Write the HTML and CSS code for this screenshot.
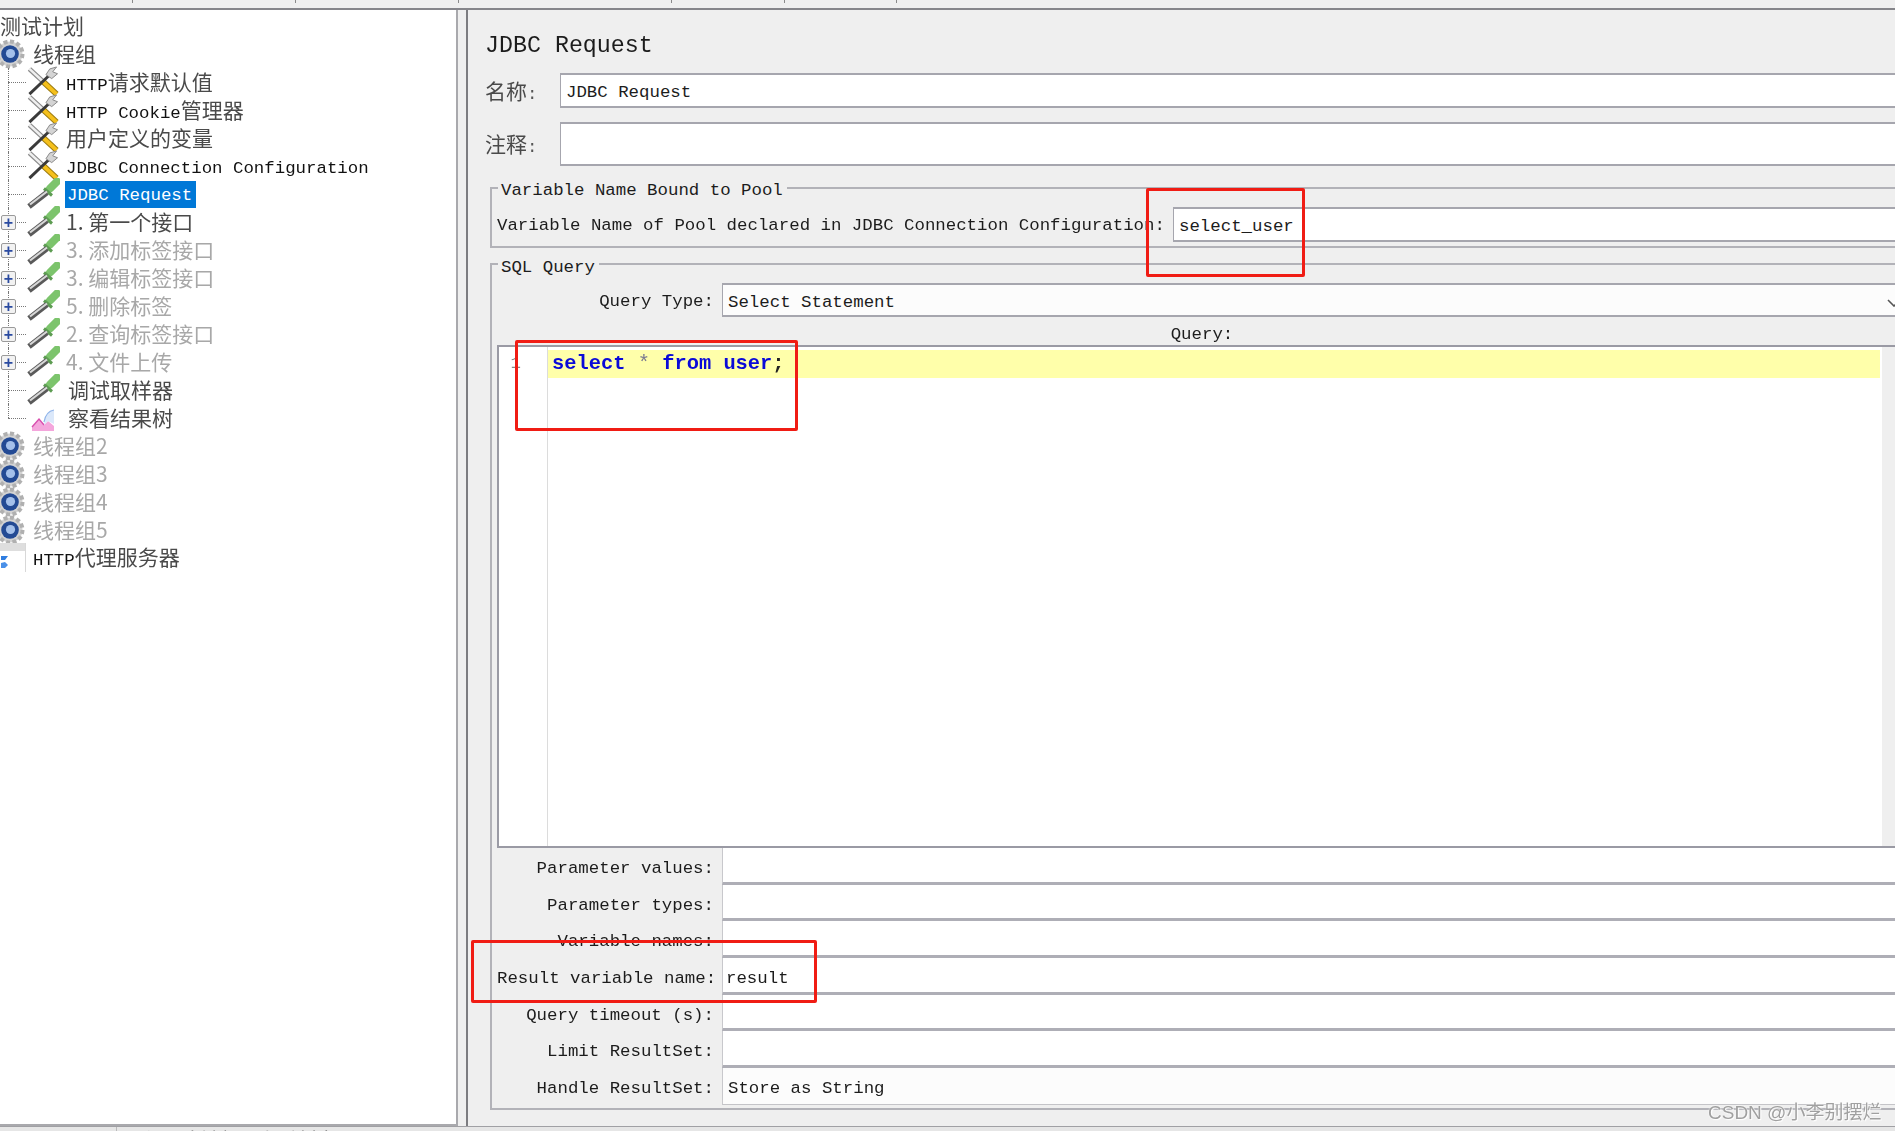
FILE: index.html
```html
<!DOCTYPE html>
<html lang="zh-CN">
<head>
    <meta charset="UTF-8">
    <title>JDBC Request</title>
    <link rel="stylesheet" href="styles.css">
</head>
<body>
    <!-- icon set used by the tree -->
    <svg class="icon-defs" width="0" height="0">
        <symbol id="gear" viewBox="0 0 30 30">
            <circle cx="15" cy="15" r="12.5" fill="#d2d2d2" stroke="#b0b0b0" stroke-width="4" stroke-dasharray="4 2.5"/>
            <circle cx="15" cy="15" r="8.8" fill="#234a94"/>
            <circle cx="15.5" cy="14.5" r="4.6" fill="#a4c0ea"/>
        </symbol>
        <symbol id="tools" viewBox="0 0 34 32">
            <path d="M3 3 L17 16" stroke="#8a8a8a" stroke-width="5" fill="none"/>
            <path d="M3 3 L17 16" stroke="#efefef" stroke-width="2.6" fill="none"/>
            <path d="M17 16 L31 29" stroke="#9a7a10" stroke-width="6" fill="none"/>
            <path d="M17 16 L31 29" stroke="#f5c01c" stroke-width="4" fill="none"/>
            <path d="M3 29 L23 10" stroke="#3a3a3a" stroke-width="3" fill="none"/>
            <path d="M20 9 L24 3 L31 1 L27 6 L32 8 L26 13 Z" fill="#d4d4d4" stroke="#888" stroke-width="1"/>
        </symbol>
        <symbol id="dropper" viewBox="0 0 34 30">
            <path d="M24 10 L31 3" stroke="#7cc46c" stroke-width="8" stroke-linecap="round" fill="none"/>
            <path d="M18 10 L26 17" stroke="#5d9c52" stroke-width="3" fill="none"/>
            <path d="M21 14 L3 28" stroke="#5a5a5a" stroke-width="5.5" fill="none"/>
            <path d="M21 13 L4 26" stroke="#d8d8d8" stroke-width="2.2" fill="none"/>
        </symbol>
        <symbol id="graph" viewBox="0 0 24 24">
            <path d="M1 23 L1 19 L8 11 L13 17 L17 13 L23 18 L23 23 Z" fill="#f4a6dc"/>
            <path d="M1 19 L8 11 L13 17" stroke="#d84fae" stroke-width="1.4" fill="none"/>
            <path d="M13 17 C14 8 17 3 23 2 L23 16 L17 13 Z" fill="#dbe8fa"/>
            <path d="M13 14 C14 8 17 3 23 2" stroke="#8fb4ea" stroke-width="1.2" fill="none"/>
        </symbol>
        <symbol id="proxy" viewBox="0 0 27 30">
            <rect x="0" y="0" width="26" height="8" fill="#dedede"/>
            <rect x="25" y="0" width="1" height="29" fill="#d8d8d8"/>
            <path d="M1 13 H8 L5 17 H1 Z" fill="#2f7de0"/>
            <path d="M1 20 L5 19 L8 22 L5 25 H1 Z" fill="#4a90e8"/>
        </symbol>
    </svg>

    <div class="app">
        <div class="toolbar">
            <div class="tool-cell w132"></div>
            <div class="tool-cell w163"></div>
            <div class="tool-cell w163"></div>
            <div class="tool-cell w213"></div>
            <div class="tool-cell w113"></div>
            <div class="tool-cell w112"></div>
        </div>

        <div class="main">
            <div class="tree">
                <div class="tree-row"><span class="zh">测试计划</span></div>
                <div class="tree-row">
                    <svg class="ico-gear"><use href="#gear"/></svg>
                    <span class="zh">线程组</span>
                </div>
                <div class="tree-row child">
                    <svg class="ico-item"><use href="#tools"/></svg>
                    <span class="label">HTTP<span class="zh">请求默认值</span></span>
                </div>
                <div class="tree-row child">
                    <svg class="ico-item"><use href="#tools"/></svg>
                    <span class="label">HTTP Cookie<span class="zh">管理器</span></span>
                </div>
                <div class="tree-row child">
                    <svg class="ico-item"><use href="#tools"/></svg>
                    <span class="label"><span class="zh">用户定义的变量</span></span>
                </div>
                <div class="tree-row child">
                    <svg class="ico-item"><use href="#tools"/></svg>
                    <span class="label latin">JDBC Connection Configuration</span>
                </div>
                <div class="tree-row child">
                    <svg class="ico-item"><use href="#dropper"/></svg>
                    <span class="label selected">JDBC Request</span>
                </div>
                <div class="tree-row child">
                    <span class="expander">+</span>
                    <svg class="ico-item"><use href="#dropper"/></svg>
                    <span class="label"><span class="zh">1. 第一个接口</span></span>
                </div>
                <div class="tree-row child off">
                    <span class="expander">+</span>
                    <svg class="ico-item"><use href="#dropper"/></svg>
                    <span class="label"><span class="zh">3. 添加标签接口</span></span>
                </div>
                <div class="tree-row child off">
                    <span class="expander">+</span>
                    <svg class="ico-item"><use href="#dropper"/></svg>
                    <span class="label"><span class="zh">3. 编辑标签接口</span></span>
                </div>
                <div class="tree-row child off">
                    <span class="expander">+</span>
                    <svg class="ico-item"><use href="#dropper"/></svg>
                    <span class="label"><span class="zh">5. 删除标签</span></span>
                </div>
                <div class="tree-row child off">
                    <span class="expander">+</span>
                    <svg class="ico-item"><use href="#dropper"/></svg>
                    <span class="label"><span class="zh">2. 查询标签接口</span></span>
                </div>
                <div class="tree-row child off">
                    <span class="expander">+</span>
                    <svg class="ico-item"><use href="#dropper"/></svg>
                    <span class="label"><span class="zh">4. 文件上传</span></span>
                </div>
                <div class="tree-row child">
                    <svg class="ico-item"><use href="#dropper"/></svg>
                    <span class="label wide"><span class="zh">调试取样器</span></span>
                </div>
                <div class="tree-row child last">
                    <svg class="ico-graph"><use href="#graph"/></svg>
                    <span class="label wide"><span class="zh">察看结果树</span></span>
                </div>
                <div class="tree-row off">
                    <svg class="ico-gear"><use href="#gear"/></svg>
                    <span class="zh">线程组2</span>
                </div>
                <div class="tree-row off">
                    <svg class="ico-gear"><use href="#gear"/></svg>
                    <span class="zh">线程组3</span>
                </div>
                <div class="tree-row off">
                    <svg class="ico-gear"><use href="#gear"/></svg>
                    <span class="zh">线程组4</span>
                </div>
                <div class="tree-row off">
                    <svg class="ico-gear"><use href="#gear"/></svg>
                    <span class="zh">线程组5</span>
                </div>
                <div class="tree-row">
                    <svg class="ico-proxy"><use href="#proxy"/></svg>
                    <span>HTTP<span class="zh">代理服务器</span></span>
                </div>
            </div>

            <div class="panel">
                <div class="panel-title">JDBC Request</div>
                <div class="name-row">
                    <div class="name-label"><span class="zh">名称</span>:</div>
                    <div class="box">JDBC Request</div>
                </div>
                <div class="name-row comment-row">
                    <div class="name-label"><span class="zh">注释</span>:</div>
                    <div class="box"></div>
                </div>

                <div class="group pool-group">
                    <div class="group-title">Variable Name Bound to Pool</div>
                    <div class="pool-row">
                        <div class="pool-label">Variable Name of Pool declared in JDBC Connection Configuration:</div>
                        <div class="box">select_user</div>
                    </div>
                </div>

                <div class="group sql-group">
                    <div class="group-title">SQL Query</div>
                    <div class="field query-type">
                        <div class="field-label">Query Type:</div>
                        <div class="box combo">Select Statement
                            <svg class="combo-arrow" width="14" height="8" viewBox="0 0 14 8"><path d="M1 1 L7 7 L13 1" stroke="#555" stroke-width="1.6" fill="none"/></svg>
                        </div>
                    </div>
                    <div class="query-caption">Query:</div>
                    <div class="editor">
                        <div class="gutter">1</div>
                        <div class="code">
                            <div class="code-line"><b>select</b> <i>*</i> <b>from</b> <b>user</b><u>;</u></div>
                        </div>
                        <div class="editor-scroll"></div>
                    </div>
                    <div class="field"><div class="field-label">Parameter values:</div><div class="cell"></div></div>
                    <div class="field"><div class="field-label">Parameter types:</div><div class="cell"></div></div>
                    <div class="field"><div class="field-label">Variable names:</div><div class="cell"></div></div>
                    <div class="field"><div class="field-label">Result variable name:</div><div class="cell">result</div></div>
                    <div class="field"><div class="field-label">Query timeout (s):</div><div class="cell"></div></div>
                    <div class="field"><div class="field-label">Limit ResultSet:</div><div class="cell"></div></div>
                    <div class="field"><div class="field-label">Handle ResultSet:</div><div class="cell combo-cell">Store as String</div></div>
                </div>
            </div>
        </div>

        <div class="bottom-strip">
            <div class="bottom-first"></div>
            <div class="bottom-text zh">义 // 判断 贝叶斯断言 三</div>
        </div>
    </div>

    <!-- annotations drawn over the screenshot -->
    <div class="mark mark-pool"></div>
    <div class="mark mark-sql"></div>
    <div class="mark mark-result"></div>
    <div class="watermark">CSDN @小李别摆烂</div>
</body>
</html>
```

FILE: styles.css
```css
html, body {
    margin: 0;
    height: 100%;
    overflow: hidden;
    background-color: #efefef;
}
body {
    position: relative;
    font-family: "Liberation Mono", "Noto Sans CJK SC", monospace;
    font-size: 17.4px;
    color: #1c1c1c;
}
.icon-defs {
    position: absolute;
}
.app {
    display: flex;
    flex-direction: column;
    height: 1131px;
    filter: blur(0.6px);
}
.zh {
    font-family: "Noto Sans CJK SC", sans-serif;
    font-size: 21px;
    color: #4a4a4a;
}

/* top strip */
.toolbar {
    display: flex;
    height: 8px;
    border-bottom: 2px solid #85858a;
    flex-shrink: 0;
}
.tool-cell {
    height: 3px;
    border-right: 1px solid #8a8a8a;
    box-sizing: border-box;
}
.w132 { width: 133px; }
.w163 { width: 163px; }
.w213 { width: 213px; }
.w113 { width: 113px; }
.w112 { width: 112px; }

.main {
    display: flex;
    flex: 1;
    min-height: 0;
}

/* tree */
.tree {
    width: 458px;
    flex-shrink: 0;
    box-sizing: border-box;
    padding-top: 2px;
    background-color: white;
    border-right: 2px solid #a9a9ad;
    border-bottom: 2px solid #a9a9ad;
    overflow: hidden;
}
.tree-row {
    display: flex;
    align-items: center;
    position: relative;
    height: 28px;
    line-height: 28px;
    white-space: nowrap;
    color: #111;
}
.tree-row > .zh {
    margin-bottom: 3px;
}
.tree-row.off .zh {
    color: #a8a8a8;
}
.tree-row.child::before {
    content: "";
    position: absolute;
    left: 8px;
    top: 0;
    bottom: 0;
    border-left: 1px dotted #777;
}
.tree-row.child::after {
    content: "";
    position: absolute;
    left: 8px;
    top: 14px;
    width: 18px;
    border-top: 1px dotted #777;
}
.tree-row.last::before {
    bottom: 14px;
}
.expander {
    position: absolute;
    z-index: 1;
    left: 1px;
    top: 7px;
    width: 13px;
    height: 13px;
    border: 1px solid #9a9a9a;
    border-radius: 2px;
    background-color: #f2f2f2;
    color: #2a4aa0;
    font-family: "Liberation Sans", sans-serif;
    font-size: 16px;
    font-weight: bold;
    line-height: 13px;
    text-align: center;
}
.ico-gear {
    width: 30px;
    height: 30px;
    margin-left: -5px;
    margin-right: 8px;
    flex-shrink: 0;
}
.ico-item {
    width: 34px;
    height: 31px;
    margin-left: 26px;
    margin-top: -1px;
    flex-shrink: 0;
    position: relative;
    z-index: 1;
}
.ico-graph {
    width: 24px;
    height: 24px;
    margin-left: 31px;
    margin-right: 5px;
    margin-top: 4px;
    flex-shrink: 0;
}
.ico-proxy {
    width: 27px;
    height: 30px;
    margin-right: 6px;
    flex-shrink: 0;
}
.label {
    margin-left: 6px;
    padding-top: 2px;
}
.label.latin {
    padding-top: 5px;
}
.label.wide {
    margin-left: 8px;
}
.label.selected {
    margin-left: 5px;
    padding: 0 4px 0 2px;
    height: 27px;
    line-height: 29px;
    background-color: #0078d7;
    color: white;
}

/* right side */
.panel {
    flex: 1;
    min-width: 0;
    margin-left: 8px;
    padding-left: 17px;
    border-left: 2px solid #7c7c80;
    overflow: hidden;
}
.panel-title {
    height: 34px;
    margin-top: 18px;
    margin-bottom: 11px;
    font-size: 23.3px;
    line-height: 36px;
}
.name-row {
    display: flex;
    height: 35px;
    margin-bottom: 14px;
}
.comment-row {
    height: 44px;
    margin-bottom: 21px;
}
.name-label {
    width: 75px;
    flex-shrink: 0;
    line-height: 35px;
    color: #555;
}
.comment-row .name-label {
    line-height: 42px;
}
.box {
    flex: 1;
    position: relative;
    box-sizing: border-box;
    padding-left: 5px;
    background-color: white;
    border: 2px solid #a6a6ae;
    border-right: none;
    border-left-width: 1px;
    line-height: 35px;
    white-space: nowrap;
}
.group {
    position: relative;
    margin-left: 5px;
    margin-right: -12px;
    padding: 18px 0 4px 5px;
    border: 2px solid #b2b2b8;
    border-right: none;
}
.group-title {
    position: absolute;
    top: -9px;
    left: 6px;
    padding: 0 4px 0 3px;
    background-color: #efefef;
    line-height: 22px;
}
.pool-row {
    display: flex;
    height: 35px;
}
.pool-label {
    width: 676px;
    flex-shrink: 0;
    line-height: 37px;
    white-space: nowrap;
}
.sql-group {
    margin-top: 15px;
    padding-bottom: 3px;
}
.sql-group .group-title {
    top: -8px;
}
.field {
    display: flex;
    height: 36.7px;
}
.field-label {
    width: 217px;
    margin-right: 8px;
    flex-shrink: 0;
    text-align: right;
    line-height: 41px;
    white-space: nowrap;
}
.query-type {
    height: 34px;
}
.query-type .field-label {
    line-height: 38px;
}
.combo {
    background-color: #fcfcfc;
}
.combo-arrow {
    position: absolute;
    right: 6px;
    top: 14px;
}
.query-caption {
    margin-top: 4px;
    height: 24px;
    line-height: 28px;
    text-align: center;
}
.editor {
    display: flex;
    height: 503px;
    box-sizing: border-box;
    border: 2px solid #9a9aa4;
    border-right: none;
    background-color: white;
}
.gutter {
    width: 49px;
    box-sizing: border-box;
    padding: 3px 26px 0 0;
    text-align: right;
    line-height: 28px;
    color: #888;
    border-right: 1px solid #dcdcdc;
}
.code {
    flex: 1;
    padding-top: 3px;
    padding-right: 2px;
}
.code-line {
    height: 28px;
    padding-left: 4px;
    background-color: #ffffaa;
    font-size: 20.4px;
    line-height: 28px;
    white-space: pre;
}
.code-line b {
    color: #0a0ad8;
}
.code-line i {
    font-style: normal;
    color: #7a7a90;
}
.code-line u {
    text-decoration: none;
    font-weight: bold;
    color: #222;
}
.editor-scroll {
    width: 25px;
    background-color: #efefef;
}
.cell {
    flex: 1;
    box-sizing: border-box;
    padding-left: 3px;
    background-color: white;
    border-left: 1px solid #c8c8cc;
    border-bottom: 3px solid #aeaeb6;
    line-height: 41px;
    white-space: nowrap;
}
.combo-cell {
    padding-left: 5px;
    background-color: #fcfcfc;
    border-bottom: 1px solid #c4c4c8;
}

/* clipped tail of the window below */
.bottom-strip {
    display: flex;
    height: 4px;
    flex-shrink: 0;
    overflow: hidden;
    border-top: 1px solid #a0a0a4;
    background-color: #e6e6e6;
}
.bottom-first {
    width: 116px;
    border-right: 1px solid #bbb;
}
.bottom-text {
    margin-left: 22px;
    line-height: 24px;
    white-space: nowrap;
    color: #666;
}

/* red annotation boxes */
.mark {
    position: absolute;
    box-sizing: border-box;
    border: 3px solid #f01c14;
    border-radius: 2px;
}
.mark-pool {
    left: 1146px;
    top: 188px;
    width: 159px;
    height: 89px;
}
.mark-sql {
    left: 515px;
    top: 340px;
    width: 283px;
    height: 91px;
}
.mark-result {
    left: 471px;
    top: 940px;
    width: 346px;
    height: 63px;
}
.watermark {
    position: absolute;
    left: 1708px;
    top: 1099px;
    font-family: "Liberation Sans", "Noto Sans CJK SC", sans-serif;
    font-size: 19px;
    line-height: 28px;
    color: #a0a0a0;
    text-shadow: 0 0 2px white, 1px 1px 1px white;
    white-space: nowrap;
}
```
